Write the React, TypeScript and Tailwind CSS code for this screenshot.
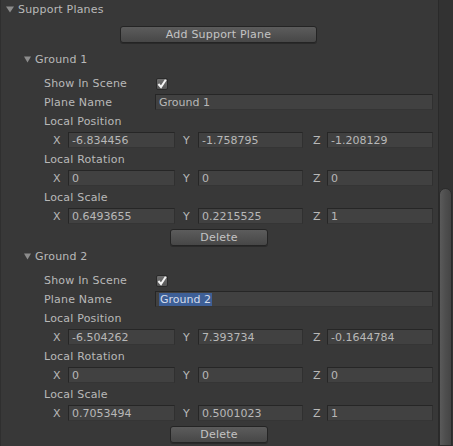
import React from 'react';

type Vec3 = [string, string, string];

type Plane = {
  name: string;
  selected?: boolean;
  position: Vec3;
  rotation: Vec3;
  scale: Vec3;
};

const planes: Plane[] = [
  {
    name: 'Ground 1',
    position: ['-6.834456', '-1.758795', '-1.208129'],
    rotation: ['0', '0', '0'],
    scale: ['0.6493655', '0.2215525', '1'],
  },
  {
    name: 'Ground 2',
    selected: true,
    position: ['-6.504262', '7.393734', '-0.1644784'],
    rotation: ['0', '0', '0'],
    scale: ['0.7053494', '0.5001023', '1'],
  },
];

export default function App() {
  return (
    <div className="flex w-[453px] h-[446px] overflow-hidden bg-[#383838] text-[11px] text-[#b8b8b8] font-['DejaVu_Sans',sans-serif] leading-none">
      {/* ===== INSPECTOR CONTENT ===== */}
      <div className="flex-1 flex flex-col border-l border-[#2f2f2f]">
        <div className="h-[18px] flex items-center pl-[5px]">
          <FoldArrow />
          <span className="ml-[4px] tracking-[0.2px]">Support Planes</span>
        </div>

        <div className="mt-[8px] flex pl-[119px]">
          <UnityButton className="w-[197px]">Add Support Plane</UnityButton>
        </div>

        <div className="mt-[7px] flex flex-col">
          {planes.map((p) => (
            <PlaneBlock key={p.name} plane={p} />
          ))}
        </div>
      </div>

      {/* ===== SCROLLBAR ===== */}
      <div className="w-[15px] h-full bg-[#323232] border-l border-[#2a2a2a] pt-[188px] pr-px flex flex-col">
        <div className="flex-1 rounded-t-[7px] border border-[#2b2b2b] bg-gradient-to-r from-[#5a5a5a] via-[#4e4e4e] to-[#454545]" />
      </div>
    </div>
  );
}

function PlaneBlock({ plane }: { plane: Plane }) {
  return (
    <div className="flex flex-col">
      <div className="h-[18px] flex items-center pl-[23px]">
        <FoldArrow small />
        <span className="ml-[4px] tracking-[0.2px]">{plane.name}</span>
      </div>

      <div className="mt-[6px] flex flex-col">
        <Row>
          <Label>Show In Scene</Label>
          <div className="ml-px self-start mt-[4px] w-[12px] h-[12px] rounded-[2px] border border-[#2a2a2a] bg-gradient-to-b from-[#6e6e6e] to-[#565656] flex items-center justify-center">
            <svg width="10" height="10" viewBox="0 0 10 10">
              <path d="M1.4 5 L4 8 L8.8 0.8" fill="none" stroke="#f4f4f4" strokeWidth="2" />
            </svg>
          </div>
        </Row>
        <Row>
          <Label>Plane Name</Label>
          <Field className="w-[278px]">
            {plane.selected ? (
              <span className="bg-[#3e5f96] text-[#d4dceb] px-px h-[13px] flex items-center">{plane.name}</span>
            ) : (
              plane.name
            )}
          </Field>
        </Row>
        <Row>
          <Label>Local Position</Label>
        </Row>
        <VecRow v={plane.position} />
        <Row>
          <Label>Local Rotation</Label>
        </Row>
        <VecRow v={plane.rotation} />
        <Row>
          <Label>Local Scale</Label>
        </Row>
        <VecRow v={plane.scale} />

        <div className="h-[21px] pt-[3px] flex pl-[169px]">
          <UnityButton className="w-[98px]">Delete</UnityButton>
        </div>
      </div>
    </div>
  );
}

function Row({ children }: { children: React.ReactNode }) {
  return <div className="h-[19px] flex items-center pl-[43px]">{children}</div>;
}

function Label({ children }: { children: React.ReactNode }) {
  return <span className="w-[111px] shrink-0 whitespace-nowrap tracking-[0.2px]">{children}</span>;
}

function Field({ className, children }: { className: string; children: React.ReactNode }) {
  return (
    <div
      className={`${className} self-start mt-px h-[16px] shrink-0 flex items-center pl-[3px] bg-[#414141] border border-[#262626] border-b-[#353535] border-r-[#303030] whitespace-nowrap overflow-hidden`}
    >
      {children}
    </div>
  );
}

function VecRow({ v }: { v: Vec3 }) {
  return (
    <div className="h-[19px] flex items-center pl-[52px]">
      <span className="w-[15px] shrink-0">X</span>
      <Field className="w-[107px]">{v[0]}</Field>
      <span className="ml-[8px] w-[15px] shrink-0">Y</span>
      <Field className="w-[105px]">{v[1]}</Field>
      <span className="ml-[10px] w-[14px] shrink-0">Z</span>
      <Field className="w-[106px]">{v[2]}</Field>
    </div>
  );
}

function UnityButton({ className, children }: { className: string; children: React.ReactNode }) {
  return (
    <div
      className={`${className} h-[17px] flex items-center justify-center rounded-[3px] border border-[#242424] bg-gradient-to-b from-[#5c5c5c] to-[#474747] text-[#c4c4c4] tracking-[0.2px] shadow-[0_1px_0_rgba(0,0,0,0.25)]`}
    >
      {children}
    </div>
  );
}

function FoldArrow({ small }: { small?: boolean }) {
  const w = small ? 7 : 8;
  return (
    <svg width={w} height="7" viewBox={`0 0 ${w} 7`} className="shrink-0">
      <polygon points={`0,0.5 ${w},0.5 ${w / 2},6.5`} fill="#8c8c8c" />
    </svg>
  );
}
